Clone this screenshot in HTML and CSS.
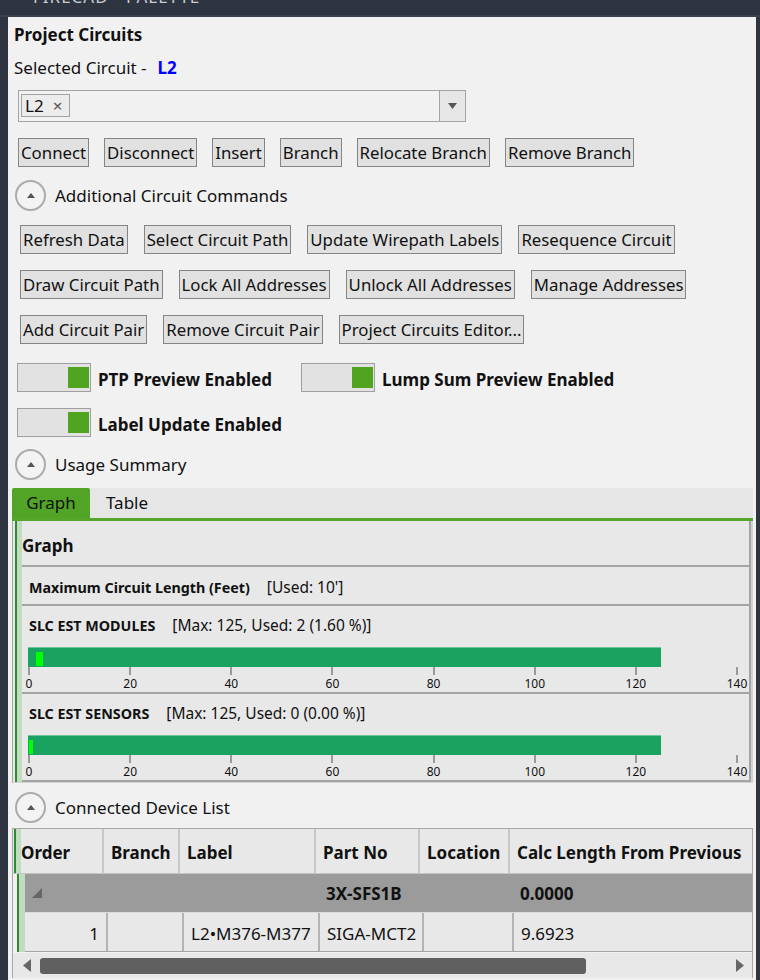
FILE: index.html
```html
<!DOCTYPE html>
<html lang="en">
<head>
    <meta charset="UTF-8">
    <title>FireCAD - Palette</title>
    <link rel="stylesheet" href="styles.css">
</head>
<body>
    <div class="window">
        <div class="titlebar"><span>FIRECAD - PALETTE</span></div>
        <div class="frame">
            <div class="panel">
                <div class="heading">Project Circuits</div>
                <div class="selected">Selected Circuit -<span class="sel-value">L2</span></div>

                <!-- circuit picker -->
                <div class="combo">
                    <div class="tag">L2<span class="tag-x">&times;</span></div>
                    <div class="combo-fill"></div>
                    <div class="combo-drop">
                        <svg width="9" height="6" viewBox="0 0 9 6"><path d="M0 0 L9 0 L4.5 6 Z" fill="#555"/></svg>
                    </div>
                </div>

                <div class="btn-row first">
                    <button class="btn">Connect</button>
                    <button class="btn">Disconnect</button>
                    <button class="btn">Insert</button>
                    <button class="btn">Branch</button>
                    <button class="btn">Relocate Branch</button>
                    <button class="btn">Remove Branch</button>
                </div>

                <div class="expander cmds">
                    <span class="exp-circle"><svg width="8" height="5" viewBox="0 0 8 5"><path d="M0 5 L4 0 L8 5 Z" fill="#555"/></svg></span>
                    <span class="exp-label">Additional Circuit Commands</span>
                </div>

                <div class="btn-block">
                    <div class="btn-row">
                        <button class="btn">Refresh Data</button>
                        <button class="btn">Select Circuit Path</button>
                        <button class="btn">Update Wirepath Labels</button>
                        <button class="btn">Resequence Circuit</button>
                    </div>
                    <div class="btn-row">
                        <button class="btn">Draw Circuit Path</button>
                        <button class="btn">Lock All Addresses</button>
                        <button class="btn">Unlock All Addresses</button>
                        <button class="btn">Manage Addresses</button>
                    </div>
                    <div class="btn-row">
                        <button class="btn">Add Circuit Pair</button>
                        <button class="btn">Remove Circuit Pair</button>
                        <button class="btn">Project Circuits Editor...</button>
                    </div>
                </div>

                <div class="toggles">
                    <div class="toggle-row">
                        <div class="toggle-item">
                            <span class="toggle"><span class="knob"></span></span>
                            <span class="toggle-label">PTP Preview Enabled</span>
                        </div>
                        <div class="toggle-item">
                            <span class="toggle"><span class="knob"></span></span>
                            <span class="toggle-label">Lump Sum Preview Enabled</span>
                        </div>
                    </div>
                    <div class="toggle-row">
                        <div class="toggle-item">
                            <span class="toggle"><span class="knob"></span></span>
                            <span class="toggle-label">Label Update Enabled</span>
                        </div>
                    </div>
                </div>

                <div class="expander usage">
                    <span class="exp-circle"><svg width="8" height="5" viewBox="0 0 8 5"><path d="M0 5 L4 0 L8 5 Z" fill="#555"/></svg></span>
                    <span class="exp-label">Usage Summary</span>
                </div>

                <div class="tabs">
                    <div class="tab active">Graph</div>
                    <div class="tab">Table</div>
                </div>

                <!-- usage graph -->
                <div class="graph">
                    <div class="gutter"></div>
                    <div class="graph-body">
                        <div class="g-head">Graph</div>
                        <div class="g-row g-simple">
                            <div class="g-title"><b>Maximum Circuit Length (Feet)</b><span>[Used: 10']</span></div>
                        </div>
                        <div class="g-row g-chart">
                            <div class="g-title"><b>SLC EST MODULES</b><span>[Max: 125, Used: 2 (1.60 %)]</span></div>
                            <div class="bar" style="width:633px"><span class="bar-used mod"></span></div>
                            <div class="axis">
                                <div class="tick"><i></i><span>0</span></div>
                                <div class="tick"><i></i><span>20</span></div>
                                <div class="tick"><i></i><span>40</span></div>
                                <div class="tick"><i></i><span>60</span></div>
                                <div class="tick"><i></i><span>80</span></div>
                                <div class="tick"><i></i><span>100</span></div>
                                <div class="tick"><i></i><span>120</span></div>
                                <div class="tick"><i></i><span>140</span></div>
                            </div>
                        </div>
                        <div class="g-row g-chart last">
                            <div class="g-title"><b>SLC EST SENSORS</b><span>[Max: 125, Used: 0 (0.00 %)]</span></div>
                            <div class="bar" style="width:633px"><span class="bar-used sen"></span></div>
                            <div class="axis">
                                <div class="tick"><i></i><span>0</span></div>
                                <div class="tick"><i></i><span>20</span></div>
                                <div class="tick"><i></i><span>40</span></div>
                                <div class="tick"><i></i><span>60</span></div>
                                <div class="tick"><i></i><span>80</span></div>
                                <div class="tick"><i></i><span>100</span></div>
                                <div class="tick"><i></i><span>120</span></div>
                                <div class="tick"><i></i><span>140</span></div>
                            </div>
                        </div>
                    </div>
                </div>

                <div class="expander devices">
                    <span class="exp-circle"><svg width="8" height="5" viewBox="0 0 8 5"><path d="M0 5 L4 0 L8 5 Z" fill="#555"/></svg></span>
                    <span class="exp-label">Connected Device List</span>
                </div>

                <!-- device grid -->
                <div class="grid">
                    <div class="grid-head">
                        <div class="head-gutter"></div>
                        <div class="hc c-order">Order</div>
                        <div class="hc c-branch">Branch</div>
                        <div class="hc c-label">Label</div>
                        <div class="hc c-part">Part No</div>
                        <div class="hc c-loc">Location</div>
                        <div class="hc c-calc">Calc Length From Previous</div>
                    </div>
                    <div class="grid-rows">
                        <div class="row-gutter"></div>
                        <div class="rows">
                            <div class="group-row">
                                <div class="gc c-order">
                                    <svg width="10" height="10" viewBox="0 0 10 10"><path d="M10 0 L10 10 L0 10 Z" fill="#666"/></svg>
                                </div>
                                <div class="gc c-branch"></div>
                                <div class="gc c-label"></div>
                                <div class="gc c-part">3X-SFS1B</div>
                                <div class="gc c-loc"></div>
                                <div class="gc c-calc">0.0000</div>
                            </div>
                            <div class="data-row">
                                <div class="dc c-order num">1</div>
                                <div class="dc c-branch"></div>
                                <div class="dc c-label">L2•M376-M377</div>
                                <div class="dc c-part">SIGA-MCT2</div>
                                <div class="dc c-loc"></div>
                                <div class="dc c-calc">9.6923</div>
                            </div>
                        </div>
                    </div>
                    <div class="hscroll">
                        <svg class="arrow" width="8" height="13" viewBox="0 0 8 13"><path d="M8 0 L8 13 L0 6.5 Z" fill="#666"/></svg>
                        <div class="track"><div class="thumb"></div></div>
                        <svg class="arrow" width="8" height="13" viewBox="0 0 8 13"><path d="M0 0 L0 13 L8 6.5 Z" fill="#666"/></svg>
                    </div>
                </div>
            </div>
        </div>
    </div>
</body>
</html>
```
FILE: styles.css
```css
/* Palette panel styling */
* {
    box-sizing: border-box;
}
body {
    margin: 0;
    background-color: #2f3540;
    font-family: "Noto Sans", "Open Sans", sans-serif;
    color: #111;
}
.window {
    width: 760px;
    height: 980px;
    overflow: hidden;
    display: flex;
    flex-direction: column;
}
.titlebar {
    height: 17px;
    flex: none;
    background-color: #2e3440;
    border-bottom: 2px solid #3b424d;
    padding-left: 33px;
    overflow: hidden;
    color: #c9cdd3;
    font-size: 17px;
    line-height: 16px;
}
.titlebar span {
    display: block;
    margin-top: -11px;
    letter-spacing: 1px;
}
.frame {
    flex: 1;
    min-height: 0;
    display: flex;
    padding: 0 4px 0 8px;
}
.panel {
    flex: 1;
    background-color: #f1f1f1;
    padding: 0 3px 0 4px;
    overflow: hidden;
}

/* header texts */
.heading {
    margin: 7px 0 0 2px;
    font-size: 17px;
    font-weight: bold;
    line-height: 22px;
}
.selected {
    margin: 11px 0 0 2px;
    font-size: 17px;
    line-height: 22px;
}
.sel-value {
    margin-left: 11px;
    color: #0000ff;
    font-weight: bold;
}

/* combo box */
.combo {
    margin: 11px 0 0 6px;
    width: 448px;
    height: 32px;
    border: 1px solid #a3a3a3;
    display: flex;
}
.tag {
    margin: 3px 0 4px 2px;
    width: 49px;
    border: 1px solid #a3a3a3;
    background-color: #ececec;
    padding-left: 3px;
    font-size: 17px;
    line-height: 22px;
}
.tag-x {
    margin-left: 9px;
    color: #555;
    font-size: 17px;
}
.combo-fill {
    flex: 1;
}
.combo-drop {
    width: 26px;
    border-left: 1px solid #a3a3a3;
    background-color: #e6e6e6;
    display: flex;
    align-items: center;
    justify-content: center;
}

/* buttons */
.btn-row {
    display: flex;
    gap: 16px;
}
.btn-row.first {
    margin: 16px 0 0 6px;
    gap: 15px;
}
.btn-block {
    margin: 14px 0 0 8px;
    display: flex;
    flex-direction: column;
    gap: 16px;
}
.btn {
    height: 29px;
    padding: 0 2px;
    border: 1px solid #858585;
    background-color: #e1e1e1;
    font-family: inherit;
    font-size: 16.8px;
    line-height: 27px;
    color: #111;
}

/* expanders */
.expander {
    display: flex;
    align-items: center;
    height: 31px;
    margin-left: 3px;
}
.expander.cmds {
    margin-top: 13px;
}
.expander.usage {
    margin-top: 12px;
}
.expander.devices {
    margin-top: 9px;
}
.exp-circle {
    width: 31px;
    height: 31px;
    border: 2px solid #ababab;
    border-radius: 50%;
    background-color: #f3f3f3;
    display: flex;
    align-items: center;
    justify-content: center;
}
.exp-label {
    margin-left: 9px;
    font-size: 17px;
}

/* toggles */
.toggles {
    margin: 19px 0 0 5px;
    display: flex;
    flex-direction: column;
    gap: 16px;
}
.toggle-row {
    display: flex;
    gap: 29px;
}
.toggle-item {
    display: flex;
    align-items: center;
}
.toggle {
    width: 74px;
    height: 29px;
    border: 1px solid #a0a0a0;
    background-color: #e2e2e2;
    display: flex;
    justify-content: flex-end;
    align-items: center;
    padding-right: 1px;
}
.knob {
    width: 21px;
    height: 21px;
    background-color: #50a41f;
}
.toggle-label {
    margin: 3px 0 0 7px;
    font-size: 17px;
    font-weight: bold;
}

/* tabs */
.tabs {
    margin-top: 8px;
    height: 33px;
    display: flex;
    background-color: #e6e6e6;
    border-bottom: 3px solid #55a62b;
}
.tab {
    padding: 0 16px;
    font-size: 17px;
    line-height: 30px;
}
.tab.active {
    width: 78px;
    background-color: #52a427;
    border-radius: 2px 2px 0 0;
    text-align: center;
    padding: 0;
}

/* graph */
.graph {
    display: flex;
    background-color: #e8e8e8;
    border-left: 1px solid #a8a8a8;
    border-right: 2px solid #d2d2d2;
    border-bottom: 1px solid #d2d2d2;
    padding-left: 2px;
}
.gutter {
    width: 7px;
    border-left: 2px solid #2e8b2e;
    background-color: #c2dcc2;
}
.graph-body {
    flex: 1;
    border-right: 2px solid #a4a4a4;
}
.g-head {
    height: 46px;
    padding-top: 14px;
    border-bottom: 2px solid #a4a4a4;
    font-size: 17px;
    font-weight: bold;
    line-height: 22px;
}
.g-row {
    border-bottom: 2px solid #a4a4a4;
}
.g-simple {
    height: 39px;
    padding-top: 10px;
}
.g-chart {
    height: 88px;
    padding-top: 9px;
}
.g-title {
    display: flex;
    align-items: baseline;
    gap: 17px;
    margin-left: 7px;
    font-size: 15.5px;
    line-height: 20px;
}
.g-title b {
    font-size: 14.3px;
}
.bar {
    margin: 11px 0 0 6px;
    height: 20px;
    background-color: #1aa260;
    box-shadow: inset 0 1px 0 #6cc594;
    display: flex;
    align-items: flex-end;
    padding-bottom: 1px;
}
.bar-used {
    height: 14px;
    background-color: #00ff00;
}
.bar-used.mod {
    width: 7px;
    margin-left: 8px;
}
.bar-used.sen {
    width: 4px;
    margin-left: 1px;
}
.axis {
    margin-left: -5px;
    width: 732px;
    display: flex;
    justify-content: space-between;
}
.tick {
    width: 24px;
    display: flex;
    flex-direction: column;
    align-items: center;
}
.tick i {
    width: 2px;
    height: 8px;
    background-color: #9a9a9a;
}
.tick span {
    margin-top: 2px;
    font-size: 12px;
    line-height: 14px;
}

/* device grid */
.grid {
    margin-top: 5px;
    border: 1px solid #a8a8a8;
    border-bottom: none;
    background-color: #f1f1f1;
}
.grid-head {
    display: flex;
    height: 45px;
    background-color: #e8e8e8;
    border-bottom: 1px solid #c4c4c4;
}
.head-gutter {
    margin-left: 1px;
    width: 7px;
    border-left: 2px solid #2e8b2e;
    background-color: #c2dcc2;
}
.hc {
    border-right: 2px solid #c8c8c8;
    padding: 3px 0 0 7px;
    font-size: 17px;
    font-weight: bold;
    line-height: 42px;
    white-space: nowrap;
}
.hc.c-order {
    padding-left: 0;
}
.c-order { width: 83px; }
.c-branch { width: 76px; }
.c-label { width: 136px; }
.c-part { width: 104px; }
.c-loc { width: 90px; }
.c-calc { flex: 1; border-right: none; }
.grid-rows {
    display: flex;
}
.row-gutter {
    margin-left: 4px;
    width: 8px;
    border-left: 2px solid #2e8b2e;
    background-color: #c2dcc2;
}
.rows {
    flex: 1;
}
.group-row {
    display: flex;
    height: 39px;
    background-color: #9b9b9b;
    border-bottom: 1px solid #dcdcdc;
    font-size: 17px;
    font-weight: bold;
    line-height: 40px;
}
.gc {
    padding-left: 6px;
    white-space: nowrap;
}
.group-row .c-order {
    display: flex;
    align-items: center;
    padding-left: 7px;
}
.data-row {
    display: flex;
    height: 39px;
    background-color: #e8e8e8;
    border-bottom: 1px solid #a4a4a4;
    font-size: 17px;
    line-height: 41px;
}
.dc {
    padding-left: 7px;
    border-right: 2px solid #b4b4b4;
    white-space: nowrap;
}
.dc.num {
    text-align: right;
    padding-right: 7px;
}
.dc.c-calc {
    border-right: none;
}
.hscroll {
    margin-top: 1px;
    height: 25px;
    background-color: #e8e8e8;
    display: flex;
    align-items: center;
    padding: 0 8px 0 10px;
    gap: 9px;
}
.track {
    flex: 1;
}
.thumb {
    width: 546px;
    height: 16px;
    border-radius: 3px;
    background-color: #606060;
}
```
